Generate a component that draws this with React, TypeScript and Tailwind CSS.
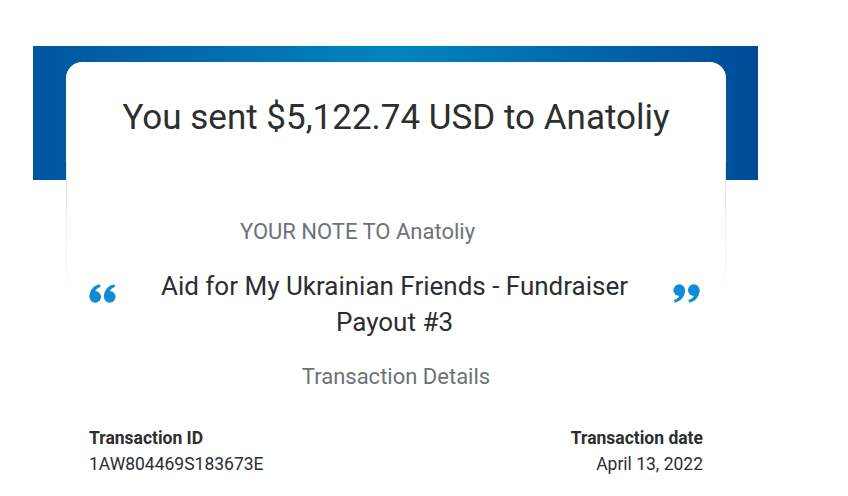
export default function App() {
  return (
    <div className="min-h-screen bg-white" style={{ fontFamily: "Roboto, 'Liberation Sans', sans-serif" }}>
      <div className="ml-[33px] pt-[46px] w-[725px]">
        <div className="h-[134px] bg-gradient-to-r from-[#00559f] via-[#0085c1] to-[#004b98]" />
        <div className="relative -mt-[118px] mx-[33px] mr-[32px] bg-white rounded-t-[16px]">
          <div className="absolute left-0 top-[100px] h-[150px] w-px bg-gradient-to-b from-[#e3e3e3] to-transparent" />
          <div className="absolute right-0 top-[100px] h-[150px] w-px bg-gradient-to-b from-[#e3e3e3] to-transparent" />
          <h1 className="pt-[36px] text-center text-[35px] leading-[40px] text-[#2c2e2f]">
            You sent $5,122.74 USD to Anatoliy
          </h1>
          <p className="mt-[80px] pl-[174px] text-[22px] leading-[28px] text-[#6c7378]">
            YOUR NOTE TO Anatoliy
          </p>
          <div className="mt-[22px] flex items-start pl-[23px] pr-[26px]">
            <QuoteMark />
            <p className="flex-1 text-center text-[26px] leading-[36px] text-[#2c2e2f]">
              Aid for My Ukrainian Friends - Fundraiser
              <br />
              Payout #3
            </p>
            <QuoteMark flip />
          </div>
          <p className="mt-[23px] text-center text-[22px] leading-[28px] text-[#6c7378]">
            Transaction Details
          </p>
          <div className="mt-[34px] flex justify-between px-[23px] text-[17.5px] leading-[26px] text-[#2c2e2f]">
            <div>
              <p className="font-bold">Transaction ID</p>
              <p>1AW804469S183673E</p>
            </div>
            <div className="text-right">
              <p className="font-bold">Transaction date</p>
              <p>April 13, 2022</p>
            </div>
          </div>
        </div>
      </div>
    </div>
  );
}

function QuoteMark({ flip = false }: { flip?: boolean }) {
  return (
    <svg
      width="27"
      height="19"
      viewBox="0 0 26 18"
      className={`mt-[16px] shrink-0 fill-[#108bd8] ${flip ? "rotate-180" : ""}`}
    >
      <g>
        <circle cx="6" cy="12.2" r="5.6" />
        <path d="M0.5 12.5 C0.2 6.5 3.6 1.8 10.2 0.2 L11.2 2.4 C7.4 3.8 5.6 6 5.4 8.5 Z" />
      </g>
      <g transform="translate(14 0)">
        <circle cx="6" cy="12.2" r="5.6" />
        <path d="M0.5 12.5 C0.2 6.5 3.6 1.8 10.2 0.2 L11.2 2.4 C7.4 3.8 5.6 6 5.4 8.5 Z" />
      </g>
    </svg>
  );
}
